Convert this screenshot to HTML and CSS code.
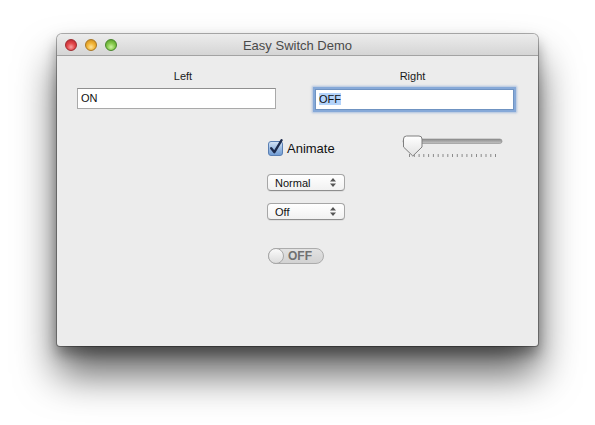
FILE: index.html
```html
<!DOCTYPE html>
<html lang="en">
<head>
  <meta charset="UTF-8">
  <title>Easy Switch Demo</title>
  <link rel="stylesheet" href="styles.css">
</head>
<body>

  <div class="window">
    <!-- title bar -->
    <div class="titlebar">
      <div class="lights">
        <span class="light red"></span>
        <span class="light yellow"></span>
        <span class="light green"></span>
      </div>
      <div class="title">Easy Switch Demo</div>
    </div>

    <div class="content">
      <!-- text fields -->
      <div class="fields">
        <div class="caption caption-left">Left</div>
        <div class="caption caption-right">Right</div>
        <div class="field">ON</div>
        <div class="field focused"><span class="selected">OFF</span></div>
      </div>

      <!-- options -->
      <div class="controls">
        <div class="row-top">
          <label class="check">
            <svg class="checkbox" width="16" height="17" viewBox="0 0 16 17">
              <defs>
                <linearGradient id="cb" x1="0" y1="0" x2="0" y2="1">
                  <stop offset="0" stop-color="#d6e5f7"/>
                  <stop offset="0.5" stop-color="#9cbce3"/>
                  <stop offset="1" stop-color="#6f9bd3"/>
                </linearGradient>
              </defs>
              <rect x="0.5" y="2.5" width="14" height="14" rx="2.5" fill="url(#cb)" stroke="#5a7fb3"/>
              <path d="M3.2 9.2 L6.4 13.2 L13.6 1.2" fill="none" stroke="#1d2b4d" stroke-width="2.3" stroke-linecap="round" stroke-linejoin="round"/>
            </svg>
            <span>Animate</span>
          </label>

          <svg class="slider" width="104" height="24" viewBox="0 0 104 24">
            <defs>
              <linearGradient id="track" x1="0" y1="0" x2="0" y2="1">
                <stop offset="0" stop-color="#8c8c8c"/>
                <stop offset="1" stop-color="#c4c4c4"/>
              </linearGradient>
              <linearGradient id="knob" x1="0" y1="0" x2="0" y2="1">
                <stop offset="0" stop-color="#ffffff"/>
                <stop offset="1" stop-color="#e2e2e2"/>
              </linearGradient>
            </defs>
            <rect x="1" y="5" width="99" height="4.5" rx="2.2" fill="url(#track)" stroke="#8a8a8a" stroke-width="0.6"/>
            <g stroke="#8a8a8a" stroke-width="1">
              <line x1="7.5" y1="20" x2="7.5" y2="23"/>
              <line x1="12.3" y1="20" x2="12.3" y2="23"/>
              <line x1="17.1" y1="20" x2="17.1" y2="23"/>
              <line x1="21.8" y1="20" x2="21.8" y2="23"/>
              <line x1="26.6" y1="20" x2="26.6" y2="23"/>
              <line x1="31.4" y1="20" x2="31.4" y2="23"/>
              <line x1="36.2" y1="20" x2="36.2" y2="23"/>
              <line x1="41" y1="20" x2="41" y2="23"/>
              <line x1="45.8" y1="20" x2="45.8" y2="23"/>
              <line x1="50.5" y1="20" x2="50.5" y2="23"/>
              <line x1="55.3" y1="20" x2="55.3" y2="23"/>
              <line x1="60.1" y1="20" x2="60.1" y2="23"/>
              <line x1="64.9" y1="20" x2="64.9" y2="23"/>
              <line x1="69.7" y1="20" x2="69.7" y2="23"/>
              <line x1="74.5" y1="20" x2="74.5" y2="23"/>
              <line x1="79.2" y1="20" x2="79.2" y2="23"/>
              <line x1="84" y1="20" x2="84" y2="23"/>
              <line x1="88.8" y1="20" x2="88.8" y2="23"/>
              <line x1="93.5" y1="20" x2="93.5" y2="23"/>
            </g>
            <path d="M1.5 5 Q1.5 2 4.5 2 L17 2 Q20 2 20 5 L20 13 L10.8 22 L1.5 13 Z" fill="url(#knob)" stroke="#7f7f7f" stroke-width="1"/>
          </svg>
        </div>

        <div class="popup">
          <span>Normal</span>
          <svg width="6" height="9" viewBox="0 0 6 9"><path d="M3 0 L6 3.5 L0 3.5 Z M3 9 L6 5.5 L0 5.5 Z" fill="#555"/></svg>
        </div>
        <div class="popup">
          <span>Off</span>
          <svg width="6" height="9" viewBox="0 0 6 9"><path d="M3 0 L6 3.5 L0 3.5 Z M3 9 L6 5.5 L0 5.5 Z" fill="#555"/></svg>
        </div>

        <div class="switch">
          <span class="switch-knob"></span>
          <span class="switch-text">OFF</span>
        </div>
      </div>
    </div>
  </div>

</body>
</html>
```

FILE: styles.css
```css
html {
  background-color: white;
}

body {
  margin: 0;
  height: 425px;
  padding-top: 34px;
  box-sizing: border-box;
  font-family: "Liberation Sans", Arial, sans-serif;
}

.window {
  width: 481px;
  height: 312px;
  margin-left: 57px;
  border-radius: 5px 5px 3px 3px;
  background-color: #ececec;
  box-shadow: 0 0 0 1px rgba(0, 0, 0, 0.3), 0 28px 40px rgba(0, 0, 0, 0.62), 0 8px 14px rgba(0, 0, 0, 0.35);
  overflow: hidden;
}

/* title bar */
.titlebar {
  position: relative;
  height: 21px;
  border-bottom: 1px solid #a3a3a3;
  border-radius: 5px 5px 0 0;
  background: linear-gradient(#ececec, #d5d5d5);
}

.lights {
  display: flex;
  gap: 8px;
  padding: 5px 0 0 8px;
}

.light {
  width: 12px;
  height: 12px;
  border-radius: 50%;
  box-sizing: border-box;
}

.red {
  background: radial-gradient(circle at 50% 70%, #f9a0a0 0, #e2474a 45%, #b3202a 100%);
  border: 1px solid #9e2a2e;
}

.yellow {
  background: radial-gradient(circle at 50% 70%, #fee39a 0, #f2b436 45%, #c6851a 100%);
  border: 1px solid #a97621;
}

.green {
  background: radial-gradient(circle at 50% 70%, #cdf3a2 0, #86c94c 45%, #4d9424 100%);
  border: 1px solid #47852a;
}

.title {
  position: absolute;
  top: 0;
  left: 0;
  right: 0;
  padding-top: 1px;
  line-height: 21px;
  text-align: center;
  font-size: 13px;
  color: #4a4a4a;
}

/* content */
.content {
  padding: 14px 0 0 20px;
}

.fields {
  display: grid;
  grid-template-columns: 199px 199px;
  column-gap: 39px;
  row-gap: 5px;
}

.caption {
  font-size: 11px;
  line-height: 13px;
  text-align: center;
  color: #1a1a1a;
}

.caption-left {
  padding-left: 13px;
}

.caption-right {
  padding-right: 4px;
}

.field {
  height: 21px;
  box-sizing: border-box;
  padding-left: 3px;
  border: 1px solid #a9a9a9;
  border-top-color: #8f8f8f;
  background-color: white;
  font-size: 11px;
  line-height: 19px;
  color: #111;
}

.field.focused {
  margin-top: 1px;
  border-color: #6f93c2;
  box-shadow: 0 0 0 2px #86a9d8, 0 0 2px 3px rgba(110, 150, 210, 0.5);
}

.selected {
  background-color: #b4d3fa;
}

.controls {
  padding: 24px 0 0 190px;
}

.row-top {
  display: flex;
  align-items: center;
  height: 24px;
}

.check {
  display: flex;
  align-items: center;
  width: 135px;
  padding-top: 5px;
  font-size: 13px;
  color: #111;
}

.checkbox {
  margin: 0 3px 3px 1px;
}

.slider {
  display: block;
}

.popup {
  display: flex;
  align-items: center;
  justify-content: space-between;
  width: 78px;
  height: 17px;
  box-sizing: border-box;
  margin-top: 16px;
  padding: 0 8px 0 7px;
  border: 1px solid #a6a6a6;
  border-bottom-color: #8e8e8e;
  border-radius: 4px;
  background: linear-gradient(#ffffff, #f1f1f1);
  box-shadow: 0 1px 0 rgba(0, 0, 0, 0.06);
  font-size: 11px;
  color: #111;
}

.popup + .popup {
  margin-top: 12px;
}

.switch {
  display: flex;
  align-items: center;
  width: 56px;
  height: 16px;
  box-sizing: border-box;
  margin: 28px 0 0 1px;
  border: 1px solid #acacac;
  border-radius: 8px;
  background: linear-gradient(#e2e2e2, #d2d2d2);
}

.switch-knob {
  width: 16px;
  height: 16px;
  box-sizing: border-box;
  margin-left: -1px;
  border: 1px solid #a8a8a8;
  border-radius: 50%;
  background: linear-gradient(#fafafa, #dcdcdc);
}

.switch-text {
  margin-left: 4px;
  font-size: 12px;
  font-weight: bold;
  color: #707070;
}
```
